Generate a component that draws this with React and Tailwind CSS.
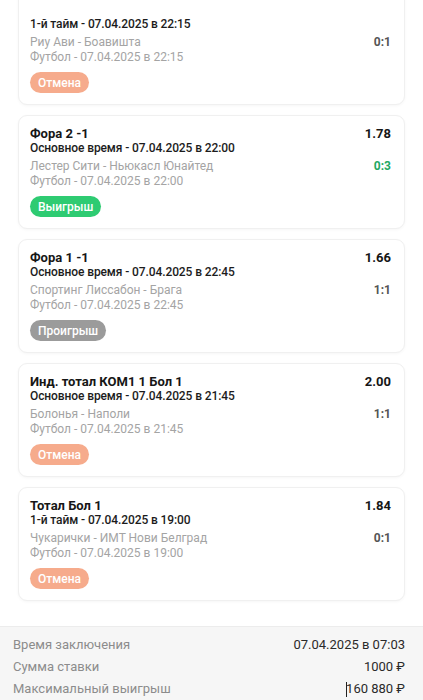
const BETS = [
  {
    title: '',
    period: '1-й тайм - 07.04.2025 в 22:15',
    coef: '',
    teams: 'Риу Ави - Боавишта',
    sport: 'Футбол - 07.04.2025 в 22:15',
    score: '0:1',
    status: 'cancel',
  },
  {
    title: 'Фора 2 -1',
    period: 'Основное время - 07.04.2025 в 22:00',
    coef: '1.78',
    teams: 'Лестер Сити - Ньюкасл Юнайтед',
    sport: 'Футбол - 07.04.2025 в 22:00',
    score: '0:3',
    status: 'win',
  },
  {
    title: 'Фора 1 -1',
    period: 'Основное время - 07.04.2025 в 22:45',
    coef: '1.66',
    teams: 'Спортинг Лиссабон - Брага',
    sport: 'Футбол - 07.04.2025 в 22:45',
    score: '1:1',
    status: 'lose',
  },
  {
    title: 'Инд. тотал КОМ1 1 Бол 1',
    period: 'Основное время - 07.04.2025 в 21:45',
    coef: '2.00',
    teams: 'Болонья - Наполи',
    sport: 'Футбол - 07.04.2025 в 21:45',
    score: '1:1',
    status: 'cancel',
  },
  {
    title: 'Тотал Бол 1',
    period: '1-й тайм - 07.04.2025 в 19:00',
    coef: '1.84',
    teams: 'Чукарички - ИМТ Нови Белград',
    sport: 'Футбол - 07.04.2025 в 19:00',
    score: '0:1',
    status: 'cancel',
  },
];

const STATUS = {
  cancel: { label: 'Отмена', cls: 'bg-[#f6ab8c]' },
  win: { label: 'Выигрыш', cls: 'bg-[#2ecb72]' },
  lose: { label: 'Проигрыш', cls: 'bg-[#9b9b9b]' },
};

function BetCard({ bet, first }) {
  const status = STATUS[bet.status];
  return (
    <div
      className={`mx-[18px] h-[114px] rounded-[9px] border border-[#f0f0f0] bg-white pl-[11px] pr-[13px] pt-[10px] shadow-[0_1px_3px_rgba(0,0,0,0.04)] ${first ? 'mt-[-9px]' : ''}`}
    >
      {/* title row scrolled out of view on the first card */}
      <div className="flex h-[15px] justify-between text-[13px] font-bold leading-[15px] text-[#161616]">
        <span>{bet.title}</span>
        <span>{bet.coef}</span>
      </div>
      <div className="text-[12px] font-medium leading-[15px] tracking-[-0.1px] text-[#1c1c1c]">{bet.period}</div>
      <div className="mt-[3px] flex justify-between text-[12px] leading-[15px]">
        <span className="text-[#a4a4a4]">{bet.teams}</span>
        <span className={`font-bold ${bet.status === 'win' ? 'text-[#22a862]' : 'text-[#555]'}`}>{bet.score}</span>
      </div>
      <div className="text-[12px] leading-[15px] text-[#a4a4a4]">{bet.sport}</div>
      <div className="mt-[7px] flex">
        <span className={`flex h-[21px] items-center rounded-full px-[8px] text-[12px] font-medium text-white ${status.cls}`}>
          {status.label}
        </span>
      </div>
    </div>
  );
}

export default function App() {
  return (
    <div
      className="h-[700px] overflow-hidden bg-white"
      style={{ fontFamily: 'Roboto, "Noto Sans", sans-serif' }}
    >
      <div className="flex flex-col gap-[10px]">
        {BETS.map((bet, i) => (
          <BetCard key={i} bet={bet} first={i === 0} />
        ))}
      </div>

      {/* Summary */}
      <div className="mt-[25px] border-t border-[#ececec] bg-[#f6f6f6] pl-[13px] pr-[18px] pt-[7px] pb-3 text-[13px]">
        <div className="flex h-[22px] items-center justify-between">
          <span className="text-[#8c8c8c]">Время заключения</span>
          <span className="text-[#2a2a2a]">07.04.2025 в 07:03</span>
        </div>
        <div className="flex h-[22px] items-center justify-between">
          <span className="text-[#8c8c8c]">Сумма ставки</span>
          <span className="text-[#2a2a2a]">1000 ₽</span>
        </div>
        <div className="flex h-[22px] items-center justify-between">
          <span className="text-[#8c8c8c]">Максимальный выигрыш</span>
          <span className="flex items-center text-[#2a2a2a]">
            <span className="mr-[-1px] inline-block h-[15px] w-px bg-[#222]" />
            160 880 ₽
          </span>
        </div>
      </div>
    </div>
  );
}
